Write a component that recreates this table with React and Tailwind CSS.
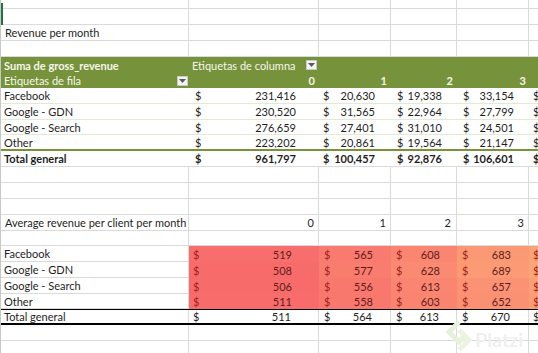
import React from "react";

const GRID = "grid grid-cols-[188px_130px_72px_66px_72px_80px]";

const pivotData = [
  ["Facebook", ["231,416", "20,630", "19,338", "33,154"]],
  ["Google - GDN", ["230,520", "31,565", "22,964", "27,799"]],
  ["Google - Search", ["276,659", "27,401", "31,010", "24,501"]],
  ["Other", ["223,202", "20,861", "19,564", "21,147"]],
];
const pivotTotal = ["961,797", "100,457", "92,876", "106,601"];

const avgData = [
  ["Facebook", [519, 565, 608, 683, 721]],
  ["Google - GDN", [508, 577, 628, 689, 733]],
  ["Google - Search", [506, 556, 613, 657, 712]],
  ["Other", [511, 558, 603, 652, 704]],
];
const avgTotal = [511, 564, 613, 670];

const PAD1 = ["pl-[6px] pr-[23px]", "pl-[4px] pr-[16px]", "pl-[6px] pr-[15px]", "pl-[6px] pr-[15px]"];
const PAD2 = ["pl-[4px] pr-[27px]", "pl-[5px] pr-[18px]", "pl-[5px] pr-[17px]", "pl-[5px] pr-[18px]"];

function scaleColor(v) {
  const t = Math.max(0, Math.min(1, (v - 500) / 500));
  const a = [248, 105, 107];
  const b = [255, 235, 132];
  const c = a.map((x, i) => Math.round(x + (b[i] - x) * t));
  return `rgb(${c[0]},${c[1]},${c[2]})`;
}

function EmptyRow({ h }) {
  return (
    <div className={`${GRID} ${h} border-b border-[#dadada]`}>
      {[0, 1, 2, 3, 4, 5].map((i) => (
        <div key={i} className="border-r border-[#dadada]" />
      ))}
    </div>
  );
}

function DropBtn() {
  return (
    <div className="w-[11px] h-[10px] bg-[#f3f3f3] border border-[#c9c9c9] flex items-center justify-center shrink-0">
      <svg width="7" height="4" viewBox="0 0 7 4">
        <path d="M0 0 L7 0 L3.5 4 Z" fill="#5a5a5a" />
      </svg>
    </div>
  );
}

function PivotRow({ label, vals, h, border, bold }) {
  return (
    <div className={`${GRID} ${h} ${border} ${bold ? "font-bold" : ""} text-[#1e1e1e]`}>
      <div className="flex items-center pl-[3px] whitespace-nowrap">{label}</div>
      {vals.map((v, i) => (
        <div key={i} className={`flex items-center justify-between whitespace-nowrap ${PAD1[i]}`}>
          <span>$</span>
          <span>{v}</span>
        </div>
      ))}
      <div className="flex items-center pl-[4px]">
        <span>$</span>
      </div>
    </div>
  );
}

function AvgRow({ label, vals, h }) {
  return (
    <div className={`${GRID} ${h}`}>
      <div className="flex items-center pl-[3px] whitespace-nowrap border-r border-b border-[#dadada] text-[#1e1e1e]">
        {label}
      </div>
      {vals.map((v, i) =>
        i < 4 ? (
          <div
            key={i}
            className={`flex items-center justify-between whitespace-nowrap ${PAD2[i]}`}
            style={{ backgroundColor: scaleColor(v) }}
          >
            <span className="text-[#a0211f]">$</span>
            <span className="text-[#5e1c1c]">{v}</span>
          </div>
        ) : (
          <div key={i} className="flex items-center pl-[4px]" style={{ backgroundColor: scaleColor(v) }}>
            <span className="text-[#a0211f]">$</span>
          </div>
        )
      )}
    </div>
  );
}

export default function App() {
  return (
    <div className="relative w-[538px] h-[353px] overflow-hidden bg-white border-l border-[#c8c8c8] font-['Lato','Liberation_Sans',sans-serif] text-[11px] leading-none text-[#1e1e1e]">
      {/* selection indicator */}
      <div className="absolute left-0 top-[3px] w-[2px] h-[22px] bg-[#217346]" />

      <EmptyRow h="h-[9px]" />
      <EmptyRow h="h-[16px]" />
      <div className={`${GRID} h-[16px] border-b border-[#dadada]`}>
        <div className="flex items-center pl-[4px] whitespace-nowrap border-r border-[#dadada]">Revenue per month</div>
        {[0, 1, 2, 3, 4].map((i) => (
          <div key={i} className="border-r border-[#dadada]" />
        ))}
      </div>
      <EmptyRow h="h-[16px]" />

      {/* pivot header */}
      <div className={`${GRID} h-[16px] bg-[#76933c] text-[#f6f6ea]`}>
        <div className="flex items-center pl-[3px] font-bold whitespace-nowrap">Suma de gross_revenue</div>
        <div className="flex items-center justify-between pl-[3px] pr-[2px] whitespace-nowrap">
          <span>Etiquetas de columna</span>
          <DropBtn />
        </div>
        <div />
        <div />
        <div />
        <div />
      </div>
      <div className={`${GRID} h-[15px] bg-[#76933c] text-[#f6f6ea]`}>
        <div className="flex items-center justify-between pl-[3px] pr-[1px] whitespace-nowrap">
          <span>Etiquetas de fila</span>
          <DropBtn />
        </div>
        <div className="flex items-center justify-end pr-[4px] font-bold">0</div>
        <div className="flex items-center justify-end pr-[4px] font-bold">1</div>
        <div className="flex items-center justify-end pr-[4px] font-bold">2</div>
        <div className="flex items-center justify-end pr-[3px] font-bold">3</div>
        <div />
      </div>

      <PivotRow label={pivotData[0][0]} vals={pivotData[0][1]} h="h-[16px]" border="border-b border-[#e3ead2]" />
      <PivotRow label={pivotData[1][0]} vals={pivotData[1][1]} h="h-[16px]" border="border-b border-[#e3ead2]" />
      <PivotRow label={pivotData[2][0]} vals={pivotData[2][1]} h="h-[15px]" border="border-b border-[#e3ead2]" />
      <PivotRow label={pivotData[3][0]} vals={pivotData[3][1]} h="h-[16px]" border="border-b-2 border-[#76933c]" />
      <PivotRow label="Total general" vals={pivotTotal} h="h-[16px]" border="border-b border-[#dadada]" bold />

      <EmptyRow h="h-[16px]" />
      <EmptyRow h="h-[16px]" />
      <EmptyRow h="h-[16px]" />

      <div className={`${GRID} h-[16px] border-b border-[#dadada]`}>
        <div className="flex items-center pl-[4px] whitespace-nowrap border-r border-[#dadada]">
          Average revenue per client per month
        </div>
        <div className="flex items-center justify-end pr-[4px] border-r border-[#dadada]">0</div>
        <div className="flex items-center justify-end pr-[4px] border-r border-[#dadada]">1</div>
        <div className="flex items-center justify-end pr-[5px] border-r border-[#dadada]">2</div>
        <div className="flex items-center justify-end pr-[4px] border-r border-[#dadada]">3</div>
        <div className="border-r border-[#dadada]" />
      </div>
      <EmptyRow h="h-[15px]" />

      <AvgRow label={avgData[0][0]} vals={avgData[0][1]} h="h-[16px]" />
      <AvgRow label={avgData[1][0]} vals={avgData[1][1]} h="h-[16px]" />
      <AvgRow label={avgData[2][0]} vals={avgData[2][1]} h="h-[16px]" />
      <div className="border-b border-black">
        <AvgRow label={avgData[3][0]} vals={avgData[3][1]} h="h-[15px]" />
      </div>
      <div className={`${GRID} h-[15px] border-b-2 border-black`}>
        <div className="flex items-center pl-[3px] whitespace-nowrap border-r border-[#dadada]">Total general</div>
        {avgTotal.map((v, i) => (
          <div key={i} className={`flex items-center justify-between whitespace-nowrap border-r border-[#dadada] ${PAD2[i]}`}>
            <span>$</span>
            <span>{v}</span>
          </div>
        ))}
        <div className="flex items-center pl-[4px] border-r border-[#dadada]">
          <span>$</span>
        </div>
      </div>
      <EmptyRow h="h-[16px]" />
      <EmptyRow h="h-[16px]" />

      {/* Platzi watermark */}
      <div className="absolute left-[444px] top-[319px] flex items-center gap-[2px] pointer-events-none">
        <svg width="28" height="34" viewBox="0 0 28 34">
          <path d="M14 3 L4 13 L14 23 L19 18" fill="none" stroke="#e6f1da" strokeWidth="5" strokeLinejoin="miter" />
          <path d="M14 11 L24 21 L14 31" fill="none" stroke="#ebf4e1" strokeWidth="5" />
        </svg>
        <span className="text-[20px] font-semibold text-[#efefef] mt-[6px]">Platzi</span>
      </div>
    </div>
  );
}
